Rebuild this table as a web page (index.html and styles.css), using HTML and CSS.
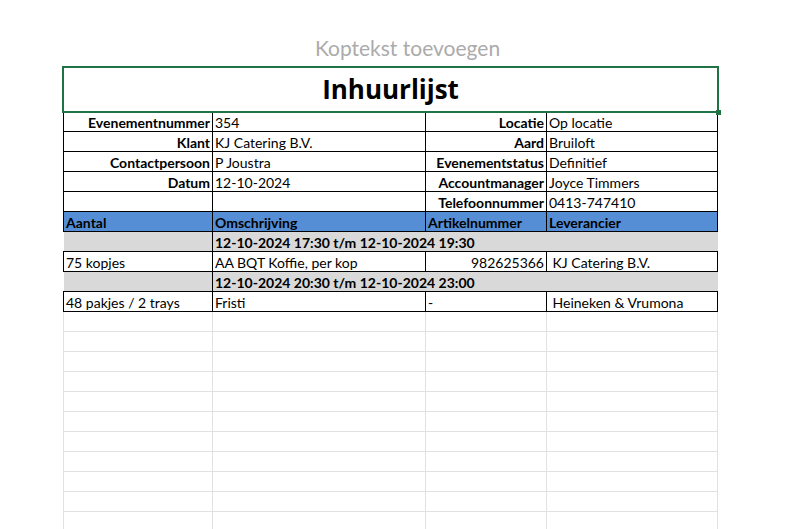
FILE: index.html
```html
<!DOCTYPE html>
<html lang="nl">
<head>
<meta charset="utf-8">
<title>Inhuurlijst</title>
<link rel="stylesheet" href="styles.css">
</head>
<body>
<div class="page-header">Koptekst toevoegen</div>
<div class="sheet">
  <table class="grid">
    <colgroup><col class="c1"><col class="c2"><col class="c3"><col class="c4"></colgroup>
    <tr class="title-row"><td colspan="4">Inhuurlijst</td></tr>
    <tr class="info"><td class="lbl">Evenementnummer</td><td>354</td><td class="lbl">Locatie</td><td>Op locatie</td></tr>
    <tr class="info"><td class="lbl">Klant</td><td>KJ Catering B.V.</td><td class="lbl">Aard</td><td>Bruiloft</td></tr>
    <tr class="info"><td class="lbl">Contactpersoon</td><td>P Joustra</td><td class="lbl">Evenementstatus</td><td>Definitief</td></tr>
    <tr class="info"><td class="lbl">Datum</td><td>12-10-2024</td><td class="lbl">Accountmanager</td><td>Joyce Timmers</td></tr>
    <tr class="info"><td></td><td></td><td class="lbl">Telefoonnummer</td><td>0413-747410</td></tr>
    <tr class="head"><td>Aantal</td><td>Omschrijving</td><td>Artikelnummer</td><td>Leverancier</td></tr>
    <tr class="period"><td class="p1"></td><td class="p2" colspan="3">12-10-2024 17:30 t/m 12-10-2024 19:30</td></tr>
    <tr class="item"><td>75 kopjes</td><td>AA BQT Koffie, per kop</td><td class="num">982625366</td><td>&nbsp;KJ Catering B.V.</td></tr>
    <tr class="period"><td class="p1"></td><td class="p2" colspan="3">12-10-2024 20:30 t/m 12-10-2024 23:00</td></tr>
    <tr class="item"><td>48 pakjes / 2 trays</td><td>Fristi</td><td>-</td><td>&nbsp;Heineken &amp; Vrumona</td></tr>
    <tr class="empty"><td></td><td></td><td></td><td></td></tr>
    <tr class="empty"><td></td><td></td><td></td><td></td></tr>
    <tr class="empty"><td></td><td></td><td></td><td></td></tr>
    <tr class="empty"><td></td><td></td><td></td><td></td></tr>
    <tr class="empty"><td></td><td></td><td></td><td></td></tr>
    <tr class="empty"><td></td><td></td><td></td><td></td></tr>
    <tr class="empty"><td></td><td></td><td></td><td></td></tr>
    <tr class="empty"><td></td><td></td><td></td><td></td></tr>
    <tr class="empty"><td></td><td></td><td></td><td></td></tr>
    <tr class="empty"><td></td><td></td><td></td><td></td></tr>
    <tr class="empty"><td></td><td></td><td></td><td></td></tr>
  </table>
  <div class="selection"><span class="handle"></span></div>
</div>
</body>
</html>
```
FILE: styles.css
```css
html, body {
  margin: 0;
  background: #ffffff;
}
body {
  font-family: Lato, "Liberation Sans", sans-serif;
  font-size: 14px;
  color: #000;
  height: 529px;
  overflow: hidden;
}
.page-header {
  padding-top: 35px;
  padding-left: 6px;
  height: 25px;
  line-height: 25px;
  font-size: 21px;
  color: #ababab;
  text-align: center;
}
.sheet {
  position: relative;
  margin: 6px 0 0 62px;
  width: 657px;
}
.grid {
  margin-left: 1px;
  border-collapse: collapse;
  table-layout: fixed;
  width: 655px;
}
.c1 { width: 149px; }
.c2 { width: 213px; }
.c3 { width: 121px; }
.c4 { width: 171px; }
.grid td {
  height: 17px;
  padding: 2px 2px 0;
  line-height: 17px;
  border: 1px solid #000;
  white-space: nowrap;
  overflow: visible;
  vertical-align: top;
}
.grid .title-row td {
  height: 45px;
  padding: 0 2px;
  border: none;
  text-align: center;
  vertical-align: middle;
  font-family: "Open Sans", Lato, sans-serif;
  font-weight: 700;
  font-size: 26px;
  line-height: 36px;
}
.grid td.lbl {
  text-align: right;
  font-weight: 700;
}
.grid td.num {
  text-align: right;
}
.grid .head td {
  background: #558ed5;
  font-weight: 700;
}
.grid .period td {
  background: #d9d9d9;
  font-weight: 700;
  border-left: none;
  border-right: none;
}
.grid .period td.p1 {
  border-right: 1px solid #000;
}
.grid .period td.p2 {
  border-left: 1px solid #000;
}
.grid .empty td {
  border: 1px solid #e1e1e1;
}
.selection {
  position: absolute;
  left: 0;
  top: 0;
  width: 653px;
  height: 43px;
  border: 2px solid #217346;
}
.handle {
  position: absolute;
  right: -4px;
  bottom: -4px;
  width: 5px;
  height: 5px;
  background: #217346;
}
```
